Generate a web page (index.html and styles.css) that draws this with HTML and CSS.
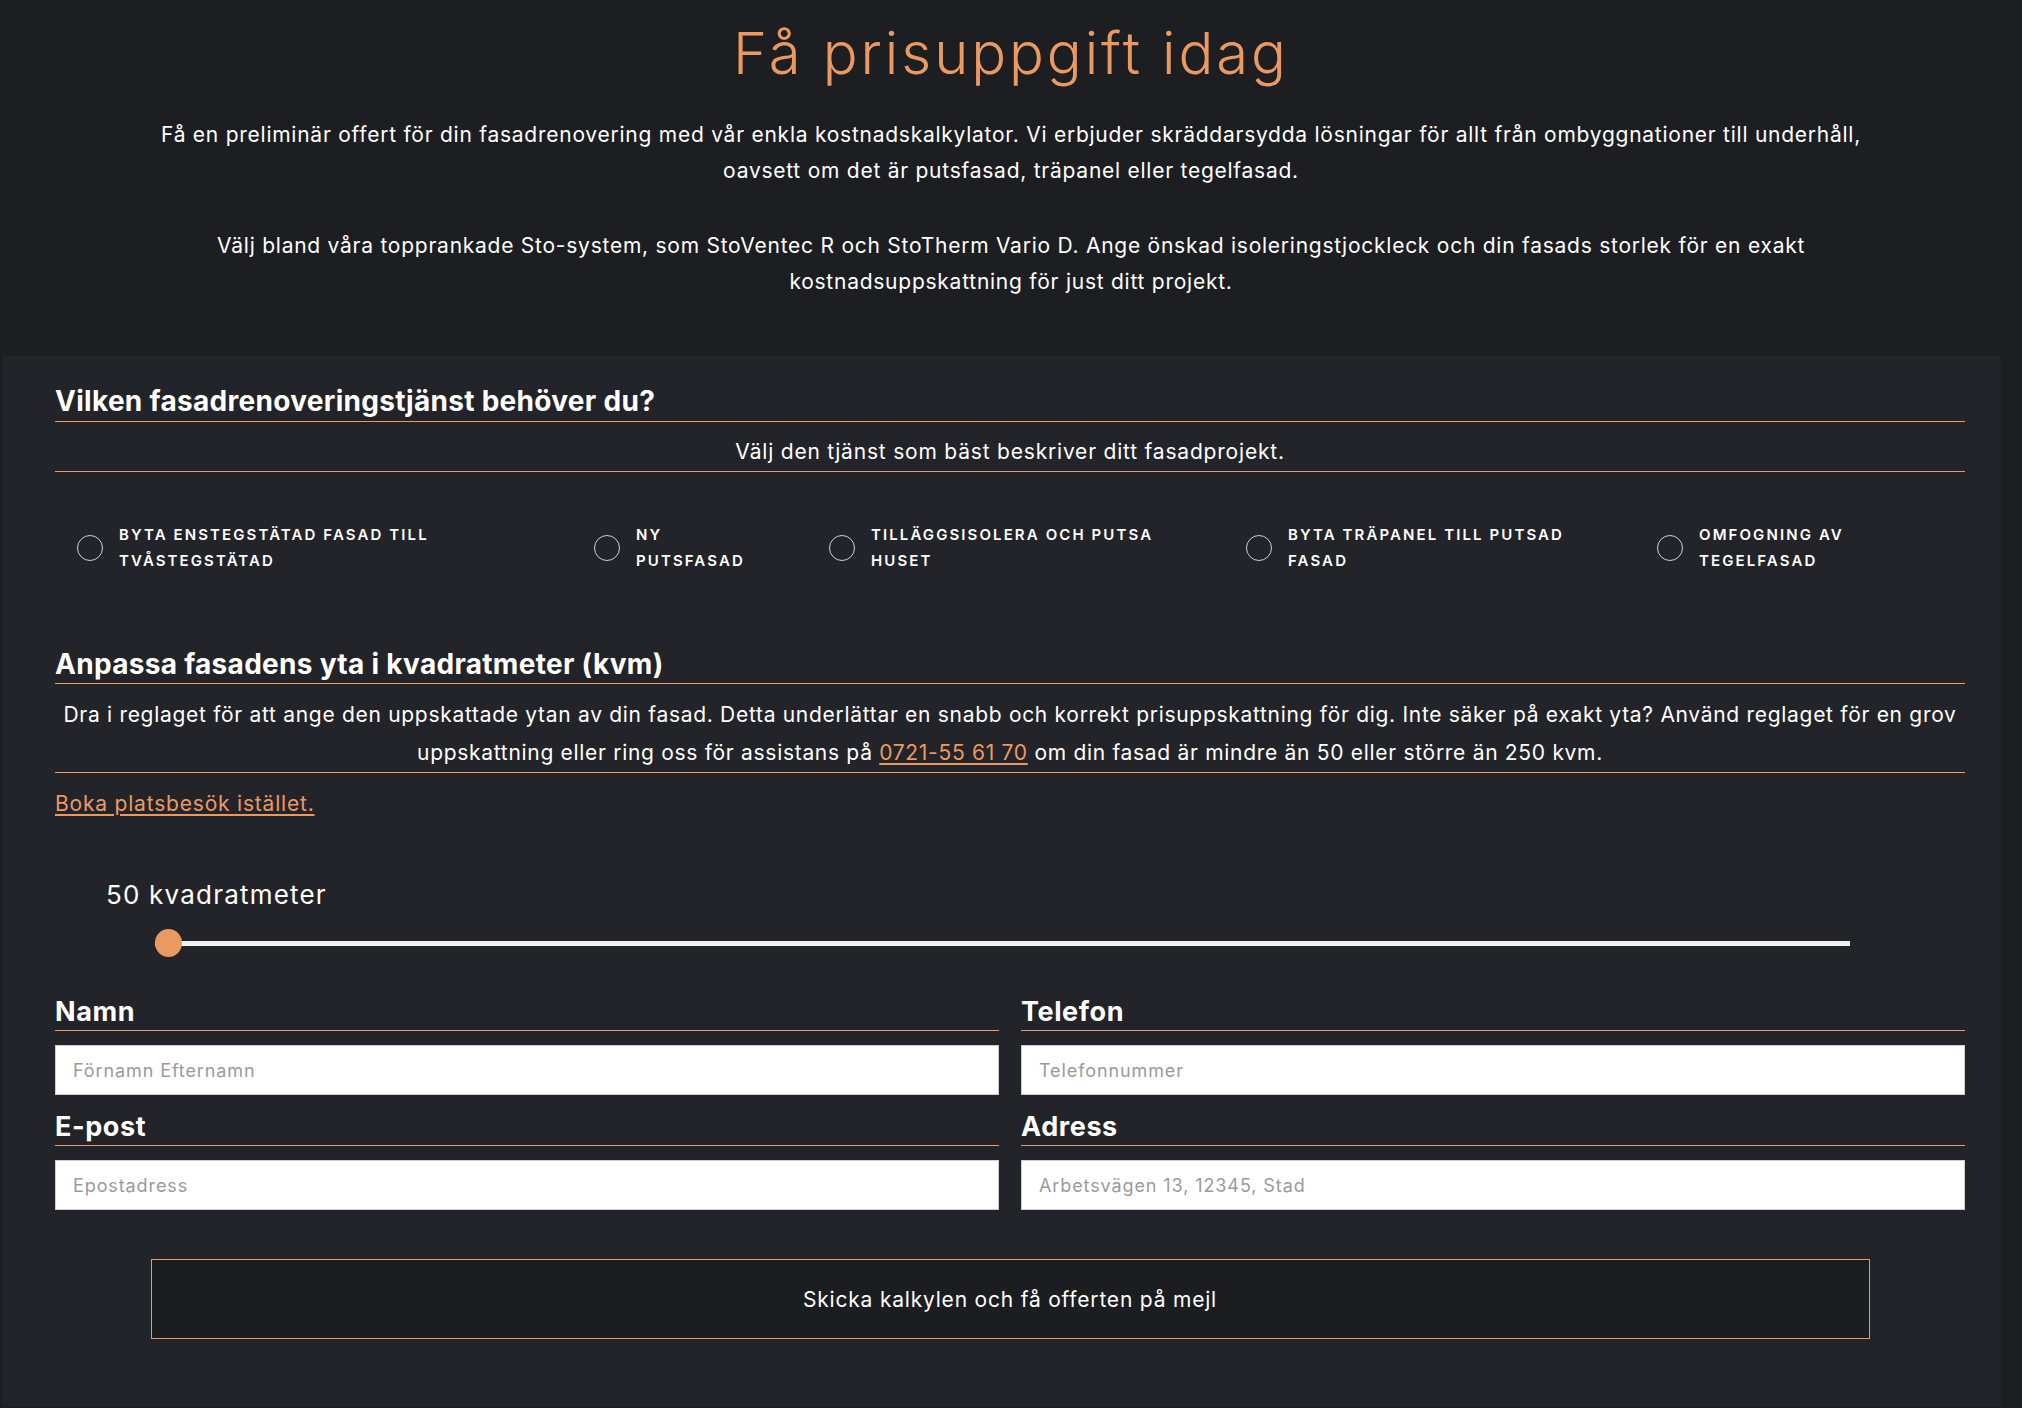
FILE: index.html
```html
<!DOCTYPE html>
<html lang="sv">
<head>
<meta charset="utf-8">
<title>Få prisuppgift idag</title>
<link rel="stylesheet" href="styles.css">
</head>
<body>
<header class="intro">
  <h1 class="intro-title">Få prisuppgift idag</h1>
  <p class="intro-text">Få en preliminär offert för din fasadrenovering med vår enkla kostnadskalkylator. Vi erbjuder skräddarsydda lösningar för allt från ombyggnationer till underhåll, oavsett om det är putsfasad, träpanel eller tegelfasad.</p>
  <p class="intro-text intro-text--second">Välj bland våra topprankade Sto-system, som StoVentec R och StoTherm Vario D. Ange önskad isoleringstjockleck och din fasads storlek för en exakt kostnadsuppskattning för just ditt projekt.</p>
</header>

<main class="calc">
  <h2 class="calc-heading">Vilken fasadrenoveringstjänst behöver du?</h2>
  <p class="calc-sub">Välj den tjänst som bäst beskriver ditt fasadprojekt.</p>

  <div class="services">
    <label class="service"><span class="radio"></span><span class="service-text">Byta enstegstätad fasad till<br>tvåstegstätad</span></label>
    <label class="service"><span class="radio"></span><span class="service-text">Ny<br>putsfasad</span></label>
    <label class="service"><span class="radio"></span><span class="service-text">Tilläggsisolera och putsa<br>huset</span></label>
    <label class="service"><span class="radio"></span><span class="service-text">Byta träpanel till putsad<br>fasad</span></label>
    <label class="service"><span class="radio"></span><span class="service-text">Omfogning av<br>tegelfasad</span></label>
  </div>

  <h2 class="calc-heading calc-heading--area">Anpassa fasadens yta i kvadratmeter (kvm)</h2>
  <p class="calc-desc">Dra i reglaget för att ange den uppskattade ytan av din fasad. Detta underlättar en snabb och korrekt prisuppskattning för dig. Inte säker på exakt yta? Använd reglaget för en grov uppskattning eller ring oss för assistans på <a class="link" href="#">0721-55 61 70</a> om din fasad är mindre än 50 eller större än 250 kvm.</p>
  <a class="link link--visit" href="#">Boka platsbesök istället.</a>

  <div class="area-value">50 kvadratmeter</div>
  <div class="slider">
    <input class="range" type="range" min="50" max="250" value="50">
  </div>

  <div class="fields">
    <div class="field">
      <div class="field-label">Namn</div>
      <input class="field-input" type="text" placeholder="Förnamn Efternamn">
    </div>
    <div class="field">
      <div class="field-label">Telefon</div>
      <input class="field-input" type="text" placeholder="Telefonnummer">
    </div>
    <div class="field">
      <div class="field-label">E-post</div>
      <input class="field-input" type="text" placeholder="Epostadress">
    </div>
    <div class="field">
      <div class="field-label">Adress</div>
      <input class="field-input" type="text" placeholder="Arbetsvägen 13, 12345, Stad">
    </div>
  </div>

  <button class="submit" type="button">Skicka kalkylen och få offerten på mejl</button>
</main>
</body>
</html>
```

FILE: styles.css
```css
* { box-sizing: border-box; }

body {
  margin: 0;
  background: #1d1e22;
  color: #ffffff;
  font-family: Inter, "Noto Sans", sans-serif;
  height: 1408px;
  overflow: hidden;
}

.intro {
  padding: 18px 0 56px;
  text-align: center;
}

.intro-title {
  margin: 0;
  font-size: 58px;
  line-height: 70px;
  font-weight: 300;
  letter-spacing: 2.9px;
  color: #ea9a61;
}

.intro-text {
  max-width: 1720px;
  margin: 29px auto 0;
  font-size: 21px;
  line-height: 36px;
  font-weight: 400;
  letter-spacing: 0.75px;
}

.intro-text--second {
  margin-top: 39px;
}

.calc {
  margin: 0 21px 0 2px;
  background: #232429;
  padding: 28px 36px 68px 53px;
}

.calc-heading {
  margin: 0;
  font-size: 28px;
  line-height: 34px;
  font-weight: 700;
  letter-spacing: 0.3px;
  padding-bottom: 3px;
  border-bottom: 1px solid #e99a61;
}

.calc-sub {
  margin: 12px 0 0;
  font-size: 21px;
  line-height: 36px;
  letter-spacing: 0.8px;
  text-align: center;
  padding-bottom: 1px;
  border-bottom: 1px solid #e99a61;
}

.services {
  display: grid;
  grid-template-columns: 517px 235px 417px 411px 1fr;
  margin-top: 50px;
  padding-left: 22px;
}

.service {
  display: flex;
  align-items: center;
  gap: 16px;
}

.radio {
  flex: none;
  width: 26px;
  height: 26px;
  border: 1px solid #d0d0d0;
  border-radius: 50%;
}

.service-text {
  font-size: 15px;
  line-height: 26px;
  font-weight: 600;
  letter-spacing: 2.1px;
  text-transform: uppercase;
}

.calc-heading--area {
  margin-top: 73px;
  padding-bottom: 2px;
}

.calc-desc {
  margin: 12px 0 0;
  font-size: 21px;
  line-height: 38px;
  letter-spacing: 0.7px;
  text-align: center;
  border-bottom: 1px solid #e99a61;
}

.link {
  color: #ea9a61;
  text-decoration: underline;
  text-underline-offset: 3px;
}

.link--visit {
  display: inline-block;
  margin-top: 13px;
  font-size: 21px;
  line-height: 36px;
  letter-spacing: 0.8px;
}

.area-value {
  margin: 58px 0 0 51px;
  font-size: 26px;
  line-height: 30px;
  letter-spacing: 1.2px;
}

.slider {
  margin: 19px 115px 0 100px;
  height: 28px;
  display: flex;
  align-items: center;
}

.range {
  -webkit-appearance: none;
  appearance: none;
  width: 100%;
  height: 5px;
  margin: 0;
  background: #f2f2f2;
  outline: none;
}

.range::-webkit-slider-thumb {
  -webkit-appearance: none;
  appearance: none;
  width: 27px;
  height: 28px;
  border-radius: 50%;
  background: #e99a61;
  border: none;
}

.fields {
  display: grid;
  grid-template-columns: 1fr 1fr;
  column-gap: 22px;
  row-gap: 17px;
  margin-top: 40px;
}

.field-label {
  font-size: 27px;
  line-height: 30px;
  font-weight: 700;
  letter-spacing: 0.6px;
  padding-bottom: 3px;
  border-bottom: 1px solid #e99a61;
}

.field-input {
  display: block;
  width: 100%;
  height: 50px;
  margin-top: 14px;
  border: 1px solid #cfcfcf;
  background: #ffffff;
  padding: 0 17px;
  font-family: Inter, "Noto Sans", sans-serif;
  font-size: 18px;
  letter-spacing: 0.9px;
  color: #333;
}

.field-input::placeholder {
  color: #9a9a9a;
}

.submit {
  display: block;
  width: 90%;
  height: 80px;
  margin: 49px auto 0;
  background: #1c1d21;
  border: 1px solid #e99a61;
  color: #ffffff;
  font-family: Inter, "Noto Sans", sans-serif;
  font-size: 21px;
  letter-spacing: 0.8px;
}
```
